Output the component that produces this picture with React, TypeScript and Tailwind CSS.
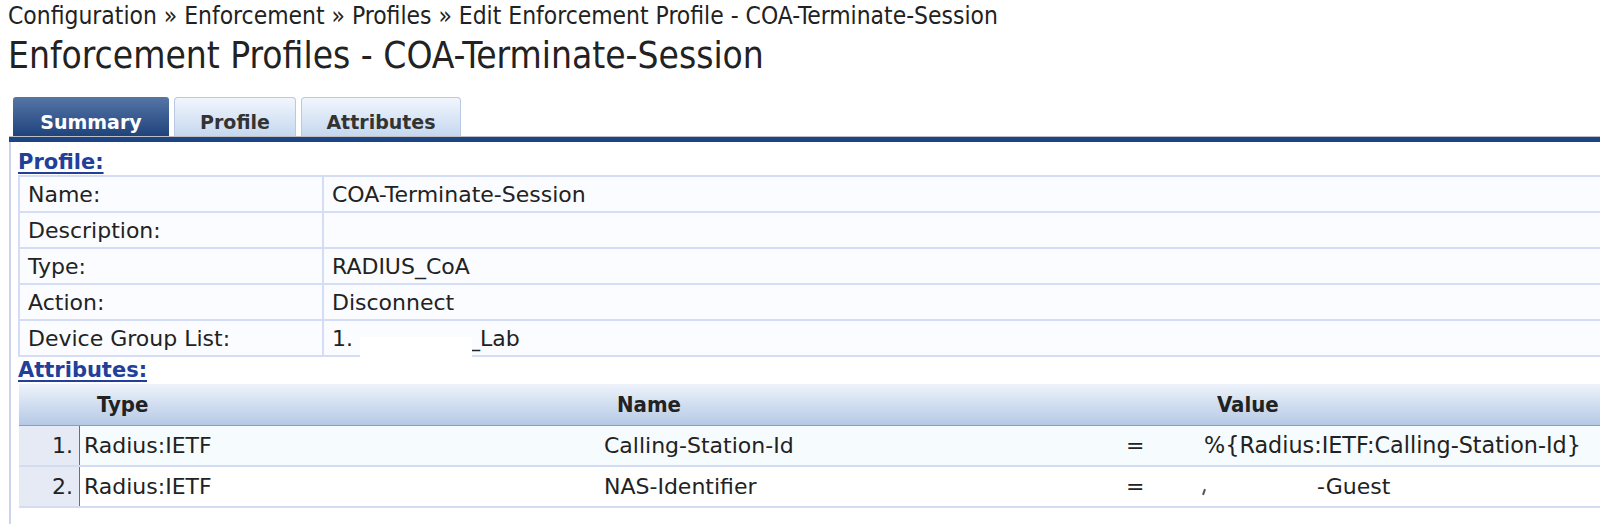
const cond = "font-['DejaVu_Sans_Condensed','DejaVu_Sans',sans-serif]";

const profileRows = [
	{ label: 'Name:', value: 'COA-Terminate-Session' },
	{ label: 'Description:', value: '' },
	{ label: 'Type:', value: 'RADIUS_CoA' },
	{ label: 'Action:', value: 'Disconnect' },
];

const Tab = ({ label, active, width }: { label: string; active?: boolean; width: string }) => (
	<div
		className={
			active
				? `${width} h-[39px] flex items-end justify-center pb-[2px] rounded-t-[3px] bg-gradient-to-b from-[#5676a6] to-[#1f437c] text-white font-bold text-[19px] leading-[23px]`
				: `${width} h-[39px] flex items-end justify-center pb-[2px] rounded-t-[4px] border border-b-0 border-[#b9c8e4] bg-gradient-to-b from-[#f1f6fd] to-[#c6d8ef] text-[#333] font-bold text-[19px] leading-[23px]`
		}
	>
		{label}
	</div>
);

export default function App() {
	return (
		<div className="w-[1600px] h-[524px] overflow-hidden bg-white text-[#222] font-['DejaVu_Sans',sans-serif]">
			{/* Breadcrumb + title */}
			<div className={`${cond} pl-[8px] pt-[1px] text-[24.4px] leading-[30px] whitespace-nowrap`}>
				Configuration » Enforcement » Profiles » Edit Enforcement Profile - COA-Terminate-Session
			</div>
			<h1 className={`${cond} pl-[8px] mt-[3px] text-[36.8px] leading-[44px] font-normal whitespace-nowrap`}>
				Enforcement Profiles - COA-Terminate-Session
			</h1>

			<div className="ml-[9px] mt-[19px]">
				{/* Tabs */}
				<div className="flex items-end gap-[5px] pl-[4px]">
					<Tab label="Summary" active width="w-[156px]" />
					<Tab label="Profile" width="w-[122px]" />
					<Tab label="Attributes" width="w-[160px]" />
				</div>
				<div className="h-[6px] border-t border-[#bfbfbf] bg-[#1d4484]" />

				{/* Panel */}
				<div className="border-l-2 border-[#cbd4ee] pl-[7px] h-[400px]">
					<div className="h-[33px] pt-[6px]">
						<span className="text-[21px] leading-[28px] font-bold text-[#22409a] underline underline-offset-[3px]">
							Profile:
						</span>
					</div>

					<div className="border-t-2 border-l-2 border-[#d4ddf5] text-[22px] bg-[#fafcff]">
						{profileRows.map((r) => (
							<div key={r.label} className="flex h-[36px] border-b-2 border-[#d4ddf5]">
								<div className="w-[304px] shrink-0 flex items-center pl-[8px] border-r-2 border-[#d4ddf5]">
									{r.label}
								</div>
								<div className="flex-1 flex items-center pl-[8px] whitespace-nowrap">{r.value}</div>
							</div>
						))}
						<div className="flex h-[36px] border-b-2 border-[#d4ddf5]">
							<div className="w-[304px] shrink-0 flex items-center pl-[8px] border-r-2 border-[#d4ddf5]">
								Device Group List:
							</div>
							<div className="relative flex-1 flex items-center pl-[8px] whitespace-nowrap">
								1.
								<span className="inline-block w-[116px]" />
								_Lab
								<div className="absolute left-[36px] top-[16px] w-[112px] h-[24px] bg-white" />
							</div>
						</div>
					</div>

					<div className="h-[27px]">
						<span className="text-[21px] leading-[27px] font-bold text-[#22409a] underline underline-offset-[3px]">
							Attributes:
						</span>
					</div>

					{/* Attributes table */}
					<div className="ml-px text-[22px] whitespace-nowrap">
						<div className={`flex h-[42px] border-b border-[#9c9c9c] bg-gradient-to-b from-[#eef3fb] to-[#b5c9e5] font-bold ${cond} text-[22px] text-[#222]`}>
							<div className="w-[61px] shrink-0" />
							<div className="w-[520px] shrink-0 flex items-center pl-[17px]">Type</div>
							<div className="w-[500px] shrink-0 flex items-center pl-[17px]">Name</div>
							<div className="w-[100px] shrink-0" />
							<div className="flex-1 flex items-center pl-[17px]">Value</div>
						</div>

						<div className="flex h-[41px] border-b-2 border-[#d3dcf3] bg-[#f6fbfd]">
							<div className="w-[61px] shrink-0 flex items-center justify-end pr-[6px] bg-[#e5eaf4] border-r border-[#6e6e6e]">1.</div>
							<div className="w-[520px] shrink-0 flex items-center pl-[4px]">Radius:IETF</div>
							<div className="w-[500px] shrink-0 flex items-center pl-[4px]">Calling-Station-Id</div>
							<div className="w-[100px] shrink-0 flex items-center pl-[26px]">=</div>
							<div className="flex-1 flex items-center pl-[4px] text-[22.3px]">%{'{'}Radius:IETF:Calling-Station-Id{'}'}</div>
						</div>

						<div className="flex h-[41px] border-b-2 border-[#d3dcf3] bg-white">
							<div className="w-[61px] shrink-0 flex items-center justify-end pr-[6px] bg-[#e5eaf4] border-r border-[#6e6e6e]">2.</div>
							<div className="w-[520px] shrink-0 flex items-center pl-[4px]">Radius:IETF</div>
							<div className="w-[500px] shrink-0 flex items-center pl-[4px]">NAS-Identifier</div>
							<div className="w-[100px] shrink-0 flex items-center pl-[26px]">=</div>
							<div className="flex-1 flex items-center pl-[3px]">
								<span className="inline-block w-[2px] h-[6px] mt-[10px] bg-[#555] rotate-[20deg]" />
								<span className="inline-block w-[112px]" />
								-Guest
							</div>
						</div>
					</div>
				</div>
			</div>
		</div>
	);
}
